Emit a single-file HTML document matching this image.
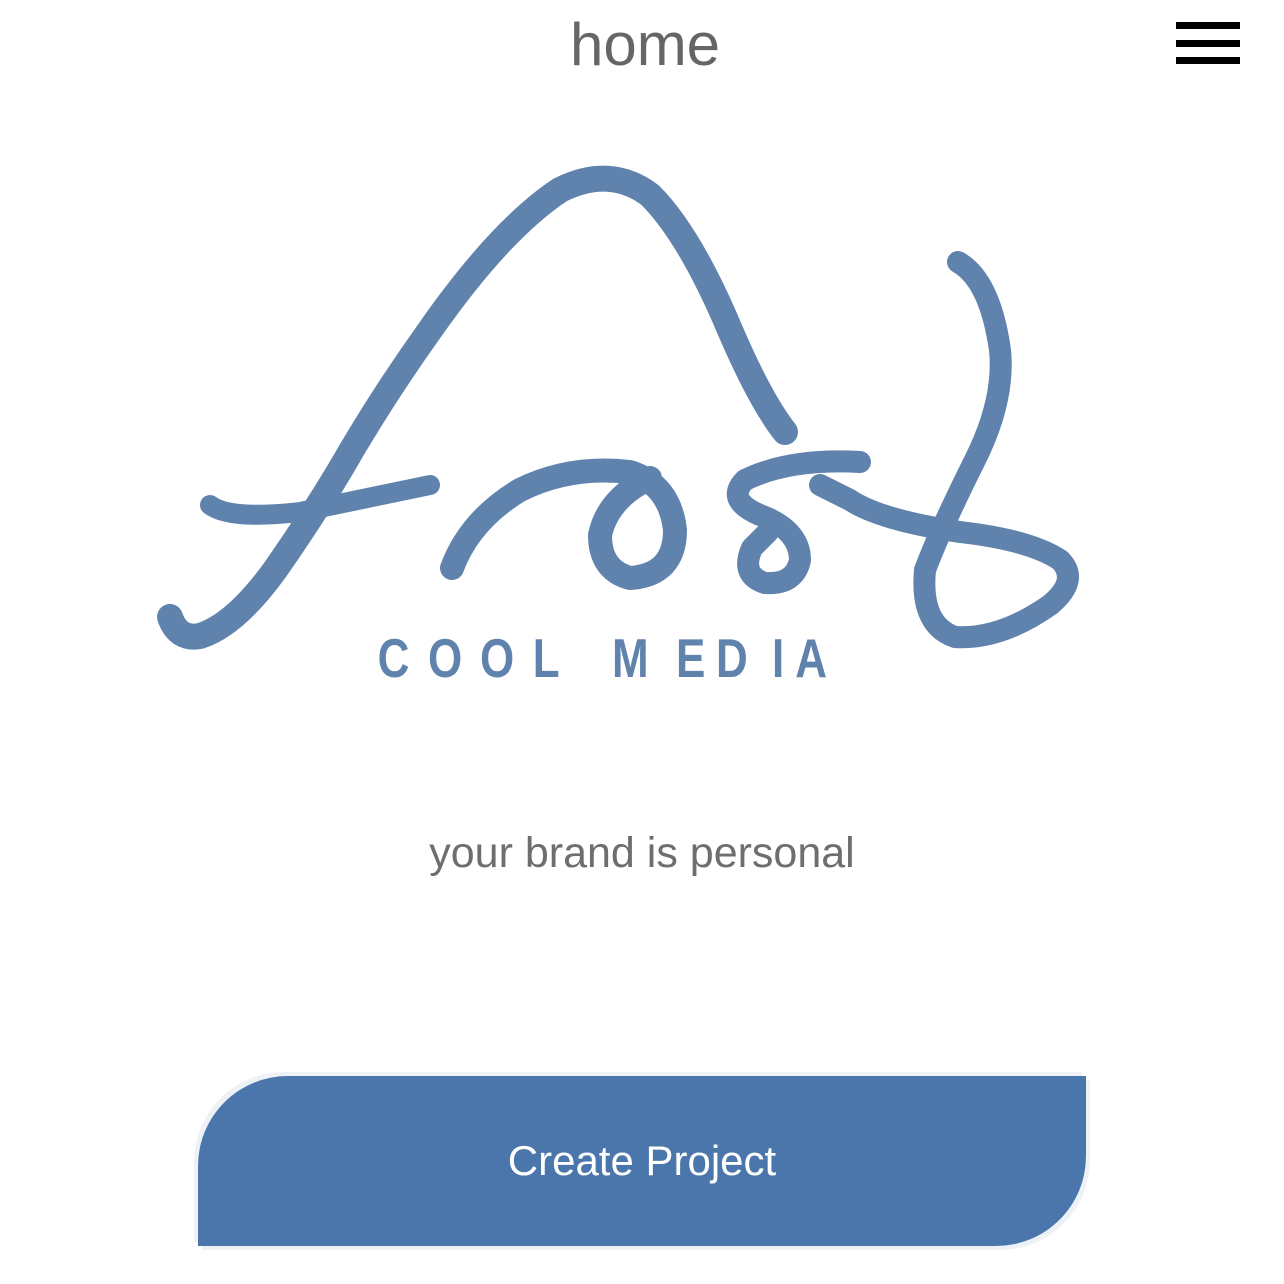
<!DOCTYPE html>
<html><head><meta charset="utf-8"><style>
html,body{margin:0;padding:0;background:#fff;width:1284px;height:1284px;overflow:hidden;position:relative;font-family:"Liberation Sans",sans-serif}
.home{position:absolute;left:0;width:1290px;top:10px;text-align:center;font-size:60px;color:#666;}
.bar{position:absolute;left:1176px;width:64px;height:7px;background:#000}
.tag{position:absolute;left:0;width:1284px;top:829px;text-align:center;font-size:43px;color:#6e6e6e}
.btn{position:absolute;left:198px;top:1076px;width:888px;height:170px;background:#4a76ab;border-radius:90px 0 90px 0;box-shadow:-4px -4px 0 #eef2f7,4px 4px 0 #eef2f7;color:#fff;font-size:42px;text-align:center;line-height:170px}
</style></head><body>
<div class="home">home</div>
<div class="bar" style="top:22px"></div><div class="bar" style="top:40px"></div><div class="bar" style="top:57px"></div>
<svg style="position:absolute;left:0;top:0" width="1284" height="760" viewBox="0 0 1284 760">
<g fill="none" stroke="#6083ae" stroke-linecap="round" stroke-linejoin="round">
<path d="M170,617 Q178,640 200,636 Q235,625 275,570 Q310,520 340,470 Q380,400 430,330 Q500,230 560,190 Q610,165 650,195 Q690,235 730,330 Q760,400 785,432" stroke-width="26"/>
<path d="M210,505 Q230,520 300,512 L430,485" stroke-width="20"/>
<path d="M452,568 Q470,520 520,490 Q570,465 630,472 Q670,485 675,530 Q675,575 630,578 Q600,570 600,535 Q608,498 650,478" stroke-width="24"/>
<path d="M860,462 Q790,458 745,480 Q725,500 760,515 Q800,530 800,560 Q795,585 765,583 Q740,575 752,548 L768,532" stroke-width="22"/>
<path d="M958,262 Q990,280 1000,350 Q1005,400 975,460 Q940,530 925,570 Q920,625 955,637 Q1000,640 1050,605 Q1080,580 1060,560 Q1030,540 960,532 Q880,520 850,500 L820,485" stroke-width="22"/>
</g>
<g transform="scale(0.8,1)" font-family="Liberation Sans,sans-serif" font-weight="bold" font-size="55" fill="#6083ae">
<text y="677"><tspan x="472">C</tspan><tspan x="535">O</tspan><tspan x="600">O</tspan><tspan x="666">L</tspan><tspan x="765">M</tspan><tspan x="845">E</tspan><tspan x="895">D</tspan><tspan x="965">I</tspan><tspan x="994">A</tspan></text>
</g>
</svg>
<div class="tag">your brand is personal</div>
<div class="btn">Create Project</div>
</body></html>
